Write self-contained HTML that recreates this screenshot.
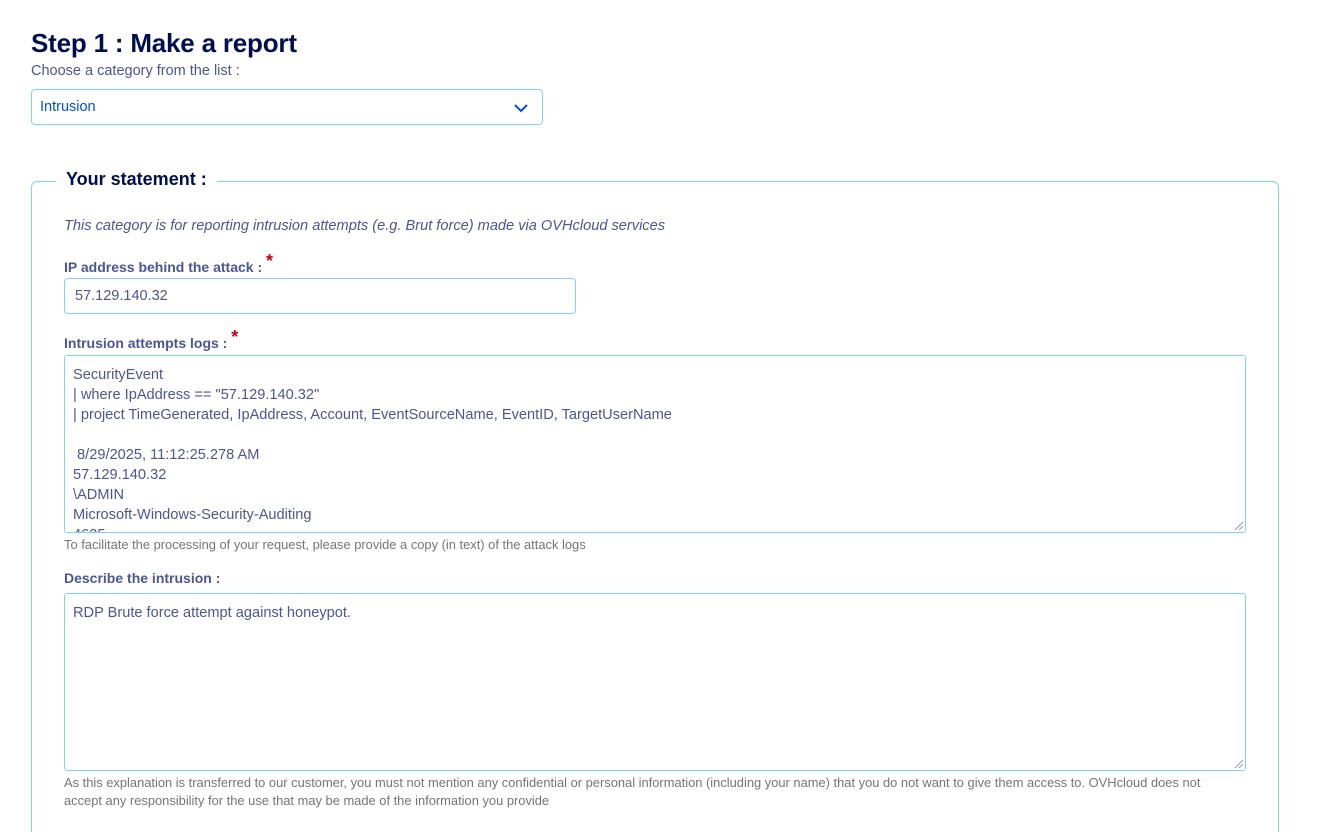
<!DOCTYPE html>
<html><head><meta charset="utf-8"><style>
*{box-sizing:border-box}
html{overflow:hidden;height:832px}
body{margin:0;background:#fff;font-family:"Liberation Sans",sans-serif;color:#4d5592;width:1343px;height:832px;overflow:hidden;position:relative}
.a{position:absolute;white-space:nowrap}
h1{position:absolute;left:31px;top:28px;margin:0;font-size:26px;font-weight:bold;color:#000e4e;letter-spacing:-0.2px}
.box{position:absolute;border:1px solid #7fd4f4;border-radius:3px;background:#fff}
.lbl{font-weight:bold;font-size:14px;color:#4d5592}
.star{color:#c2001b;font-size:18px;font-weight:bold}
.help{font-size:12.9px;color:#757575}
.ta{font-size:14.6px;line-height:20px;color:#4d5592;padding:9px 8px;overflow:hidden}
.grip{position:absolute;right:1px;bottom:1px}
</style></head><body>
<h1>Step 1 : Make a report</h1>
<div class="a" style="left:31px;top:63px;font-size:14.5px;color:#4d5592">Choose a category from the list :</div>
<div class="box" style="left:31px;top:89px;width:512px;height:36px;border-radius:4px">
 <div class="a" style="left:8px;top:9px;font-size:14.5px;color:#0050d7">Intrusion</div>
 <svg class="a" style="left:481px;top:12px" width="16" height="12" viewBox="0 0 16 12"><path d="M2 3l6 6 6-6" fill="none" stroke="#0050d7" stroke-width="2"/></svg>
</div>
<div class="box" style="left:31px;top:181px;width:1248px;height:680px;border-radius:6px"></div>
<div class="a" style="left:56px;top:169px;padding:0 10px;background:#fff;font-size:18px;font-weight:bold;color:#000e4e">Your statement :</div>
<div class="a" style="left:64px;top:218px;font-size:14.6px;font-style:italic;color:#4d5592">This category is for reporting intrusion attempts (e.g. Brut force) made via OVHcloud services</div>
<div class="a lbl" style="left:64px;top:256px">IP address behind the attack : <span class="star" style="position:relative;top:-5px">*</span></div>
<div class="box" style="left:64px;top:278px;width:512px;height:36px;border-radius:4px"><div class="a" style="left:10px;top:9px;font-size:14.5px">57.129.140.32</div></div>
<div class="a lbl" style="left:64px;top:332px">Intrusion attempts logs : <span class="star" style="position:relative;top:-5px">*</span></div>
<div class="box ta" style="left:64px;top:355px;width:1182px;height:178px">SecurityEvent<br>| where IpAddress == "57.129.140.32"<br>| project TimeGenerated, IpAddress, Account, EventSourceName, EventID, TargetUserName<br><br>&nbsp;8/29/2025, 11:12:25.278 AM<br>57.129.140.32<br>\ADMIN<br>Microsoft-Windows-Security-Auditing<br>4625
<svg class="grip" width="10" height="10" viewBox="0 0 10 10"><path d="M9 1L1 9M9 5L5 9" stroke="#999" stroke-width="1"/></svg></div>
<div class="a help" style="left:64px;top:537px">To facilitate the processing of your request, please provide a copy (in text) of the attack logs</div>
<div class="a lbl" style="left:64px;top:570px">Describe the intrusion :</div>
<div class="box ta" style="left:64px;top:593px;width:1182px;height:178px">RDP Brute force attempt against honeypot.
<svg class="grip" width="10" height="10" viewBox="0 0 10 10"><path d="M9 1L1 9M9 5L5 9" stroke="#999" stroke-width="1"/></svg></div>
<div class="a help" style="left:64px;top:774px;line-height:18px">As this explanation is transferred to our customer, you must not mention any confidential or personal information (including your name) that you do not want to give them access to. OVHcloud does not<br>accept any responsibility for the use that may be made of the information you provide</div>
</body></html>
